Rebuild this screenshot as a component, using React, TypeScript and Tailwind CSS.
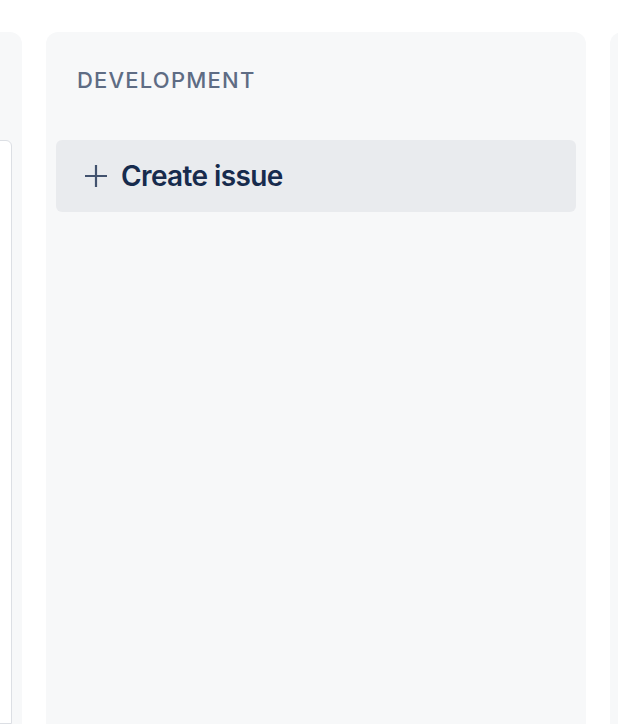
import React from "react";

function PlusIcon() {
  return (
    <svg width="24" height="24" viewBox="0 0 24 24" className="shrink-0">
      <path d="M12 1v22M1 12h22" stroke="#42526e" strokeWidth="2.2" strokeLinecap="butt" fill="none" />
    </svg>
  );
}

export default function App() {
  return (
    <div
      className="h-[724px] w-[618px] overflow-hidden bg-white"
      style={{ fontFamily: "Inter, 'Noto Sans', sans-serif" }}
    >
      <div className="flex h-full gap-6 pt-8 -ml-[518px]">
        {/* left column (mostly off-screen) */}
        <div className="w-[540px] shrink-0 rounded-t-xl bg-[#f7f8f9] px-[10px] pt-[108px]">
          <div className="h-full rounded-t-md border border-[#dcdfe4] bg-white" />
        </div>

        {/* middle column */}
        <div className="w-[540px] shrink-0 rounded-t-xl bg-[#f7f8f9] px-[10px]">
          <div className="h-[108px] px-[21px] pt-8">
            <h2 className="text-[22px] leading-8 font-medium tracking-[0.055em] text-[#5e6c84]">
              DEVELOPMENT
            </h2>
          </div>
          <button className="flex h-[72px] w-full items-center gap-[13px] rounded-md bg-[#e9ebee] pl-[28px] text-left">
            <PlusIcon />
            <span className="text-[28px] font-semibold leading-none tracking-[-0.022em] text-[#172b4d]">
              Create issue
            </span>
          </button>
        </div>

        {/* right column (mostly off-screen) */}
        <div className="w-[540px] shrink-0 rounded-t-xl bg-[#f7f8f9]" />
      </div>
    </div>
  );
}
